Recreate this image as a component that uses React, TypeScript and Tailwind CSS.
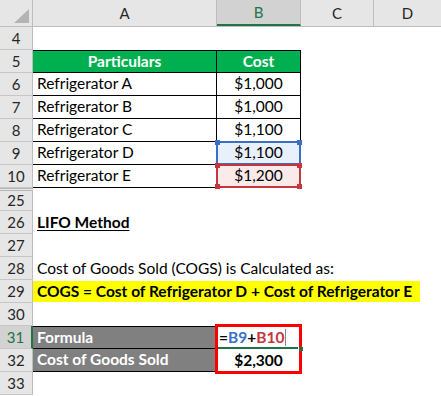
import type { ReactNode } from "react";

const font = { fontFamily: "Lato, 'Open Sans', sans-serif" };

const RowHead = ({
  n,
  active,
  doubleTop,
}: {
  n: number;
  active?: boolean;
  doubleTop?: boolean;
}) => (
  <div
    className={`flex w-[33px] shrink-0 items-center justify-center border-b border-[#c6c6c6] text-[15px] ${
      active
        ? "border-r-2 border-r-[#217346] bg-[#d2d2d2] text-[#217346]"
        : "border-r border-r-[#bdbdbd] bg-[#e6e6e6] text-[#262626]"
    } ${doubleTop ? "border-t-[3px] border-t-[#b5b5b5] [border-top-style:double]" : ""}`}
  >
    {n}
  </div>
);

const Row = ({
  n,
  children,
  active,
  doubleTop,
}: {
  n: number;
  children?: ReactNode;
  active?: boolean;
  doubleTop?: boolean;
}) => (
  <div className="flex h-[23px] shrink-0">
    <RowHead n={n} active={active} doubleTop={doubleTop} />
    <div className="flex flex-1">{children}</div>
  </div>
);

const tableRows = [
  { n: 6, name: "Refrigerator A", cost: "$1,000" },
  { n: 7, name: "Refrigerator B", cost: "$1,000" },
  { n: 8, name: "Refrigerator C", cost: "$1,100" },
  { n: 9, name: "Refrigerator D", cost: "$1,100", mark: "blue" },
  { n: 10, name: "Refrigerator E", cost: "$1,200", mark: "red" },
];

const Handle = ({ cls, color }: { cls: string; color: string }) => (
  <span className={`absolute h-[5px] w-[5px] ${cls} ${color}`} />
);

const App = () => {
  return (
    <div className="flex h-[396px] w-[441px] flex-col overflow-hidden bg-white text-[15.5px] text-black" style={font}>
      {/* column headers */}
      <div className="flex h-[27px] shrink-0 border-b border-[#bdbdbd] bg-[#e6e6e6] text-[15px] text-[#262626]">
        <div className="relative w-[33px] shrink-0 border-r border-[#bdbdbd]">
          <svg className="absolute bottom-[3px] right-[3px]" width="15" height="14" viewBox="0 0 15 14">
            <polygon points="15,0 15,14 0,14" fill="#b4b4b4" />
          </svg>
        </div>
        <div className="flex w-[184px] items-center justify-center border-r border-[#bdbdbd]">A</div>
        <div className="flex w-[84px] items-center justify-center border-b-2 border-r border-b-[#217346] border-r-[#bdbdbd] bg-[#d2d2d2] text-[#217346]">
          B
        </div>
        <div className="flex w-[73px] items-center justify-center border-r border-[#bdbdbd]">C</div>
        <div className="flex flex-1 items-center justify-center">D</div>
      </div>

      <Row n={4} />
      <Row n={5}>
        <div className="flex w-[184px] items-center justify-center border-y border-r border-black bg-[#00b050] font-bold text-white">
          Particulars
        </div>
        <div className="flex w-[84px] items-center justify-center border-y border-r border-black bg-[#00b050] font-bold text-white">
          Cost
        </div>
      </Row>
      {tableRows.map((r) => (
        <Row key={r.n} n={r.n}>
          <div className="flex w-[184px] items-center border-b border-r border-black pl-[4px]">{r.name}</div>
          <div className="relative flex w-[84px] items-center justify-center border-b border-r border-black">
            {r.mark === "blue" && (
              <div className="absolute -left-[1px] -top-[1px] h-[24px] w-[85px] border-2 border-[#3a6fc9] bg-[#e8f0fb]">
                <Handle cls="-left-[3px] -top-[3px]" color="bg-[#3a6fc9]" />
                <Handle cls="-right-[3px] -top-[3px]" color="bg-[#3a6fc9]" />
              </div>
            )}
            {r.mark === "red" && (
              <div className="absolute -left-[1px] -top-[1px] h-[24px] w-[85px] border-2 border-[#c6363e] bg-[#fbeaea]">
                <Handle cls="-left-[3px] -top-[3px]" color="bg-[#c6363e]" />
                <Handle cls="-right-[3px] -top-[3px]" color="bg-[#c6363e]" />
                <Handle cls="-left-[3px] -bottom-[3px]" color="bg-[#c6363e]" />
                <Handle cls="-right-[3px] -bottom-[3px]" color="bg-[#c6363e]" />
              </div>
            )}
            <span className="relative">{r.cost}</span>
          </div>
        </Row>
      ))}
      <Row n={25} doubleTop />
      <Row n={26}>
        <div className="flex items-center pl-[4px] font-bold underline underline-offset-2">LIFO Method</div>
      </Row>
      <Row n={27} />
      <Row n={28}>
        <div className="flex items-center pl-[4px]">Cost of Goods Sold (COGS) is Calculated as:</div>
      </Row>
      <Row n={29}>
        <div className="my-[1px] flex w-[387px] items-center bg-[#ffff00] pl-[4px] font-bold">
          COGS = Cost of Refrigerator D + Cost of Refrigerator E
        </div>
      </Row>
      <Row n={30} />
      <Row n={31} active>
        <div className="flex w-[182px] items-center border-y border-black bg-[#808080] pl-[4px] font-bold text-white">
          Formula
        </div>
        <div className="relative flex w-[86px] items-center pl-[4px] font-bold">
          {/* red outline spanning B31:B32 */}
          <div className="pointer-events-none absolute -top-[2px] left-0 h-[50px] w-[87px] border-[3px] border-[#ff0000]" />
          <div className="absolute bottom-0 left-[3px] h-[2px] w-[80px] bg-[#217346]" />
          <span className="absolute -bottom-[2px] left-[84px] h-[4px] w-[4px] bg-[#217346]" />
          <span>=</span>
          <span className="text-[#3a6fc9]">B9</span>
          <span>+</span>
          <span className="text-[#c6363e]">B10</span>
          <span className="ml-[1px] h-[17px] w-px bg-[#888]" />
        </div>
      </Row>
      <Row n={32}>
        <div className="flex w-[182px] items-center border-b border-black bg-[#808080] pl-[4px] font-bold text-white">
          Cost of Goods Sold
        </div>
        <div className="flex w-[87px] items-center justify-center font-bold">$2,300</div>
      </Row>
      <Row n={33} />
    </div>
  );
};

export default App;
